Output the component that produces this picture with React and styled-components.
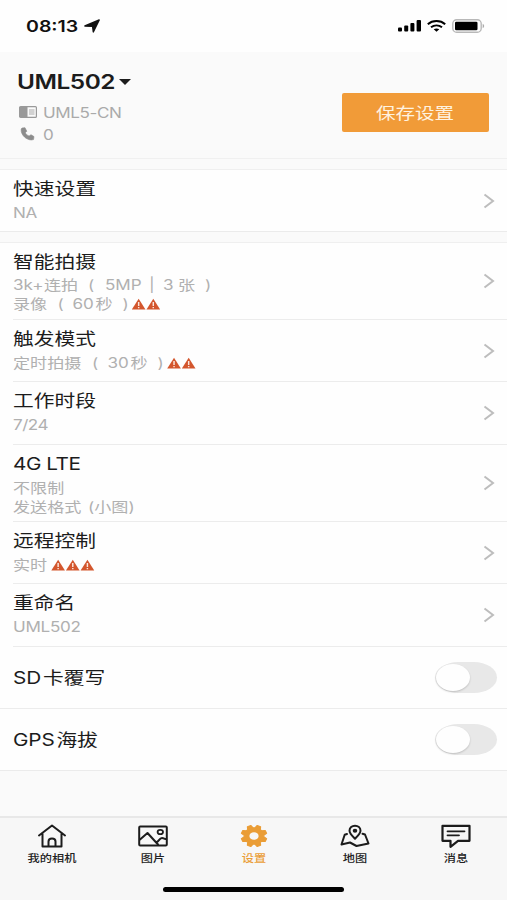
import React from 'react';
import styled, { createGlobalStyle } from 'styled-components';

const STRETCH = 1.22;

const GlobalStyle = createGlobalStyle`
  * { box-sizing: border-box; }
  body {
    margin: 0;
    background: #fafafa;
    font-family: Inter, "Noto Sans CJK SC", sans-serif;
    color: #1c1c1c;
  }
  svg { display: block; flex: none; }
`;

const Screen = styled.div`
  width: 507px;
  height: 900px;
  display: flex;
  flex-direction: column;
  overflow: hidden;
  background: #fafafa;
`;

const Wide = styled.span`
  display: inline-flex;
  align-items: center;
  white-space: pre;
  letter-spacing: ${(p) => p.$track || 0}px;
  transform: scaleX(${STRETCH});
  transform-origin: ${(p) => p.$origin || 'left'} center;
`;

const StatusBar = styled.div`
  height: 52px;
  flex: none;
  display: flex;
  justify-content: space-between;
  align-items: center;
  padding: 0 22px 0 26px;
  background: #fefefe;
`;

const Clock = styled.div`
  display: flex;
  align-items: center;
  font-size: 16px;
  font-weight: 600;
  color: #111;
  span { width: 58px; }
`;

const StatusIcons = styled.div`
  display: flex;
  align-items: center;
  gap: 6px;
`;

const Header = styled.header`
  height: 107px;
  flex: none;
  display: flex;
  justify-content: space-between;
  padding: 15px 18px 0 17px;
  border-bottom: 1px solid #f0f0f0;
`;

const DeviceName = styled.div`
  height: 30px;
  margin-bottom: 4px;
  display: flex;
  align-items: center;
  gap: 5px;
  font-size: 20px;
  font-weight: 600;
  span { width: 97px; }
`;

const DeviceLine = styled.div`
  height: 22px;
  display: flex;
  align-items: center;
  padding-left: 2px;
  font-size: 14px;
  color: #aaa;
  svg { margin-right: 6px; }
`;

const SaveButton = styled.button`
  width: 147px;
  height: 39px;
  margin-top: 26px;
  padding: 0 1px 2px 0;
  display: flex;
  justify-content: center;
  align-items: center;
  border: 0;
  border-radius: 2px;
  background: #f19b38;
  color: #fff3e0;
  font: 400 16px Inter, "Noto Sans CJK SC", sans-serif;
`;

const Group = styled.section`
  flex: none;
  margin-top: 10px;
  background: #fefefe;
  border-top: 1px solid #efefef;
  border-bottom: 1px solid #ebebeb;
`;

const Row = styled.div`
  height: ${(p) => p.$h}px;
  margin-left: ${(p) => (p.$full ? 0 : 13)}px;
  padding-left: ${(p) => (p.$full ? 13 : 0)}px;
  padding-right: ${(p) => (p.$toggle ? 10 : 12)}px;
  display: flex;
  justify-content: space-between;
  align-items: center;
  & + & { border-top: 1px solid #ececec; }
`;

const RowText = styled.div`
  align-self: ${(p) => (p.$center ? 'center' : 'flex-start')};
  padding-top: ${(p) => (p.$center ? 0 : 7)}px;
  display: flex;
  flex-direction: column;
  align-items: flex-start;
`;

const Title = styled(Wide)`
  height: 24px;
  margin-bottom: ${(p) => p.$gap || 0}px;
  font-size: 17px;
  line-height: 24px;
`;

const Sub = styled(Wide)`
  height: 19px;
  font-size: 14px;
  line-height: 19px;
  color: #b0b0b0;
`;

const Seg = styled.span`
  display: inline-block;
  width: ${(p) => p.$w / STRETCH}px;
`;

const Switch = styled.div`
  width: 62px;
  height: 31px;
  display: flex;
  border-radius: 24px / 16px;
  background: #e8e8e8;
`;

const Knob = styled.div`
  width: 34px;
  height: 27px;
  margin: 2px 1px;
  border-radius: 50%;
  background: #fefefe;
  box-shadow: 0 1px 2px rgba(0, 0, 0, 0.18);
`;

const TabBar = styled.nav`
  height: 84px;
  margin-top: auto;
  flex: none;
  display: flex;
  flex-direction: column;
  align-items: center;
  border-top: 2px solid #e8e8e8;
  background: #f7f7f7;
`;

const Tabs = styled.div`
  width: 507px;
  height: 69px;
  display: grid;
  grid-template-columns: repeat(5, 101px);
  justify-content: center;
`;

const Tab = styled.div`
  display: flex;
  flex-direction: column;
  align-items: center;
  padding-top: 6px;
  font-size: 10px;
  font-weight: 500;
  line-height: 16px;
  color: ${(p) => (p.$active ? '#ea9d36' : '#222')};
  svg { margin-bottom: 2px; }
`;

const HomeBar = styled.div`
  width: 181px;
  height: 5px;
  border-radius: 3px;
  background: #000;
`;

const Warn = () => (
  <svg width="12" height="12" viewBox="0 0 12 12">
    <path d="M6 .7 11.6 11.4H.4z" fill="#d3562d" />
    <path d="M6 4v4M6 8.9v1.3" stroke="#fbe5dc" strokeWidth="1.2" />
  </svg>
);

const Chevron = () => (
  <svg width="12" height="16" viewBox="0 0 12 16">
    <path d="m1.5 1.5 8.5 6.5-8.5 6.5" fill="none" stroke="#bdbdbd" strokeWidth="2" />
  </svg>
);

const icon = { fill: 'none', stroke: '#1c1c1c', strokeWidth: 2, strokeLinejoin: 'round', strokeLinecap: 'round' };

const gearPath = (() => {
  const pts = [];
  for (let i = 0; i < 8; i += 1) {
    const c = ((i + 0.5) * Math.PI) / 4;
    [[-0.3, 8.2], [-0.14, 10.8], [0.14, 10.8], [0.3, 8.2]].forEach(([d, r]) => {
      pts.push(`${(15 + Math.sin(c + d) * r * 1.2).toFixed(2)} ${(12 - Math.cos(c + d) * r).toFixed(2)}`);
    });
  }
  return `M${pts.join('L')}Z`;
})();

const HomeIcon = () => (
  <svg width="30" height="24" viewBox="0 0 30 24" {...icon}>
    <path d="M2 11.5 15 1.5l13 10M5.5 10v12.5h19V10M11.5 22v-4.500c0-4 7-4 7 0V22" />
  </svg>
);
const PictureIcon = () => (
  <svg width="30" height="24" viewBox="0 0 30 24" {...icon}>
    <rect x="1.2" y="2.5" width="27.6" height="19" rx="1" />
    <ellipse cx="22.3" cy="8" rx="2.7" ry="2.2" strokeWidth="1.8" />
    <path d="M2 15.5 9.5 9 20 20.5M18.5 18c2.5 0 2.5-4 5.5-4 2 0 2.5 1 4 1" />
  </svg>
);
const GearIcon = () => (
  <svg width="30" height="24" viewBox="0 0 30 24">
    <path d={gearPath} fill="#ea9d36" stroke="#ea9d36" strokeWidth="1.2" strokeLinejoin="round" />
    <ellipse cx="15" cy="12" rx="4.6" ry="3.8" fill="#f7f7f7" />
  </svg>
);
const MapIcon = () => (
  <svg width="30" height="24" viewBox="0 0 30 24" {...icon}>
    <path d="M15 14.7C11.5 11.2 9.5 9.4 9.5 6.7 9.5 3.7 12 1.7 15 1.7s5.5 2 5.5 5c0 2.7-2 4.5-5.5 8Z" />
    <ellipse cx="15" cy="6.7" rx="1.3" ry="1" fill="#1c1c1c" />
    <path d="M7 10 4.7 10.7 1.5 20.5l8.5-2 6.5 3.5 12-2.5-3.5-9-2.5-.8" />
  </svg>
);
const MessageIcon = () => (
  <svg width="30" height="24" viewBox="0 0 30 24" {...icon} strokeWidth="2.2">
    <path d="M1.5 1.8h27v15H17l-7.5 6v-6h-8Z" />
    <path d="M6.5 7.3h17M6.5 11.3H18" strokeWidth="1.8" />
  </svg>
);

const rows = [
  {
    h: 76,
    gap: 1,
    title: '智能拍摄',
    subs: [
      <Sub key="a"><Seg $w={31}>3k+</Seg><Seg $w={44}>连拍</Seg><Seg $w={17}>(</Seg><Seg $w={44}>5MP</Seg><Seg $w={14}>|</Seg><Seg $w={15}>3</Seg><Seg $w={27}>张</Seg>)</Sub>,
      <Sub key="b"><Seg $w={44.5}>录像</Seg><Seg $w={15}>(</Seg><Seg $w={23}>60</Seg><Seg $w={27}>秒</Seg><Seg $w={8.8}>)</Seg><Warn /><Warn /></Sub>,
    ],
  },
  {
    h: 62,
    title: '触发模式',
    subs: [<Sub key="a"><Seg $w={79}>定时拍摄</Seg><Seg $w={15.5}>(</Seg><Seg $w={23}>30</Seg><Seg $w={27}>秒</Seg><Seg $w={9.2}>)</Seg><Warn /><Warn /></Sub>],
  },
  { h: 63, title: '工作时段', subs: [<Sub key="a" $track={-0.4}>7/24</Sub>] },
  { h: 77, title: '4G LTE', track: -0.4, subs: [<Sub key="a">不限制</Sub>, <Sub key="b"><Seg $w={75}>发送格式</Seg>(小图)</Sub>] },
  { h: 62, title: '远程控制', subs: [<Sub key="a"><Seg $w={37.5}>实时</Seg><Warn /><Warn /><Warn /></Sub>] },
  { h: 63, title: '重命名', subs: [<Sub key="a" $track={-0.25}>UML502</Sub>] },
];

const tabs = [
  { label: '我的相机', Icon: HomeIcon },
  { label: '图片', Icon: PictureIcon },
  { label: '设置', Icon: GearIcon, active: true },
  { label: '地图', Icon: MapIcon },
  { label: '消息', Icon: MessageIcon },
];

export default function App() {
  return (
    <Screen>
      <GlobalStyle />
      <StatusBar>
        <Clock>
          <Wide>08:13</Wide>
          <svg width="16" height="14" viewBox="0 0 16 14">
            <path d="M15.2.9 9.3 12.9 8.6 7.400.9 7Z" fill="#111" stroke="#111" strokeWidth="1.4" strokeLinejoin="round" />
          </svg>
        </Clock>
        <StatusIcons>
          <svg width="23" height="12" viewBox="0 0 23 12" fill="#000">
            <rect y="7.5" width="4" height="4" rx="1" />
            <rect x="6.2" y="5.5" width="4" height="6" rx="1" />
            <rect x="12.4" y="3" width="4" height="8.5" rx="1" />
            <rect x="18.6" y="0" width="4.4" height="11.5" rx="1" />
          </svg>
          <svg width="19" height="12" viewBox="0 0 19 12" fill="none" stroke="#000" strokeWidth="2">
            <path d="M.8 4.2C5.6 0 13.4 0 18.2 4.2M4 7.3c3.2-2.5 7.8-2.5 11 0" />
            <path d="m6.7 9.3 2.8 2.5 2.8-2.5c-1.6-1.2-4-1.2-5.6 0Z" fill="#000" stroke="none" />
          </svg>
          <svg width="33" height="14" viewBox="0 0 33 14">
            <rect x=".8" y=".8" width="28.4" height="12.4" rx="3.8" fill="#fff" stroke="#b8b8b8" strokeWidth="1.4" />
            <rect x="3" y="2.8" width="22.5" height="8.4" rx="1.3" />
            <path d="M30.7 4.8c2 .8 2 3.6 0 4.4Z" fill="#aaa" />
          </svg>
        </StatusIcons>
      </StatusBar>

      <Header>
        <div>
          <DeviceName>
            <Wide $track={-0.4}>UML502</Wide>
            <svg width="12" height="6" viewBox="0 0 12 6"><path d="M0 0h12L6 6Z" fill="#1c1c1c" /></svg>
          </DeviceName>
          <DeviceLine>
            <svg width="18" height="12" viewBox="0 0 18 12">
              <rect x=".6" y=".6" width="16.8" height="10.8" rx="1" fill="none" stroke="#999" strokeWidth="1.2" />
              <path d="M1 1h7.5v10H1z" fill="#999" />
              <path d="M10 4h5.5M10 6h5.5M10 8h5.5" stroke="#aaa" />
            </svg>
            <Wide $track={-0.35}>UML5-CN</Wide>
          </DeviceLine>
          <DeviceLine>
            <svg width="18" height="14" viewBox="0 0 18 14">
              <path d="M3 1 6 .7 7.8 4.300 6.300 5.700c.8 1.600 1.900 2.600 3.800 3.300L12 7.700l3 1.900-.5 3C9 14.500 1.300 8.500 2.200 2Z" fill="#8c8c8c" stroke="#8c8c8c" strokeWidth=".6" strokeLinejoin="round" />
            </svg>
            <Wide>0</Wide>
          </DeviceLine>
        </div>
        <SaveButton><Wide $origin="center">保存设置</Wide></SaveButton>
      </Header>

      <Group>
        <Row $h={61}>
          <RowText><Title $gap={2}>快速设置</Title><Sub $track={-0.3}>NA</Sub></RowText>
          <Chevron />
        </Row>
      </Group>

      <Group>
        {rows.map((r) => (
          <Row key={r.title} $h={r.h}>
            <RowText><Title $gap={r.gap || 2} $track={r.track}>{r.title}</Title>{r.subs}</RowText>
            <Chevron />
          </Row>
        ))}
        <Row $h={62} $toggle>
          <RowText $center><Title><Seg $w={30}>SD</Seg>卡覆写</Title></RowText>
          <Switch><Knob /></Switch>
        </Row>
        <Row $h={62} $full $toggle>
          <RowText $center><Title $track={-0.1}><Seg $w={43.5}>GPS</Seg>海拔</Title></RowText>
          <Switch><Knob /></Switch>
        </Row>
      </Group>

      <TabBar>
        <Tabs>
          {tabs.map(({ label, Icon, active }) => (
            <Tab key={label} $active={active}>
              <Icon />
              <Wide $origin="center">{label}</Wide>
            </Tab>
          ))}
        </Tabs>
        <HomeBar />
      </TabBar>
    </Screen>
  );
}
